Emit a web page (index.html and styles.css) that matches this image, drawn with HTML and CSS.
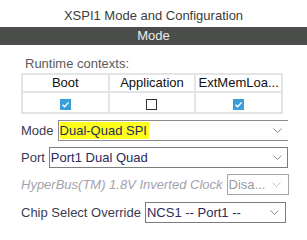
FILE: index.html
```html
<!DOCTYPE html>
<html lang="en">
<head>
  <meta charset="UTF-8">
  <link rel="stylesheet" href="styles.css">
</head>
<body>
  <div class="title">XSPI1 Mode and Configuration</div>
  <div class="bar">Mode</div>

  <div class="panel">
    <div class="caption">Runtime contexts:</div>
    <table class="contexts">
      <tr>
        <th>Boot</th>
        <th>Application</th>
        <th title="ExtMemLoader">ExtMemLoa...</th>
      </tr>
      <tr>
        <td><span class="check on"><svg width="11" height="11" viewBox="0 0 11 11"><polyline points="2.5,5.8 4.6,7.8 8.6,3.4" fill="none" stroke="#fff" stroke-width="1.4"/></svg></span></td>
        <td><span class="check"></span></td>
        <td><span class="check on"><svg width="11" height="11" viewBox="0 0 11 11"><polyline points="2.5,5.8 4.6,7.8 8.6,3.4" fill="none" stroke="#fff" stroke-width="1.4"/></svg></span></td>
      </tr>
    </table>

    <div class="row row-mode">
      <span class="label">Mode</span>
      <div class="select open">
        <span class="value"><span class="hl">Dual-Quad SPI</span></span>
        <svg class="chev" width="9" height="5" viewBox="0 0 9 5"><polyline points="0.5,0.5 4.5,4.5 8.5,0.5" fill="none" stroke="#8a8a8a" stroke-width="1"/></svg>
      </div>
    </div>

    <div class="row row-port">
      <span class="label">Port</span>
      <div class="select">
        <span class="value">Port1 Dual Quad</span>
        <svg class="chev" width="9" height="5" viewBox="0 0 9 5"><polyline points="0.5,0.5 4.5,4.5 8.5,0.5" fill="none" stroke="#8a8a8a" stroke-width="1"/></svg>
      </div>
    </div>

    <div class="row row-hyper disabled">
      <span class="label">HyperBus(TM) 1.8V Inverted Clock</span>
      <div class="select">
        <span class="value">Disa...</span>
        <svg class="chev" width="9" height="5" viewBox="0 0 9 5"><polyline points="0.5,0.5 4.5,4.5 8.5,0.5" fill="none" stroke="#c4c4c4" stroke-width="1"/></svg>
      </div>
    </div>

    <div class="row row-cs">
      <span class="label">Chip Select Override</span>
      <div class="select">
        <span class="value">NCS1 -- Port1 --</span>
        <svg class="chev" width="9" height="5" viewBox="0 0 9 5"><polyline points="0.5,0.5 4.5,4.5 8.5,0.5" fill="none" stroke="#8a8a8a" stroke-width="1"/></svg>
      </div>
    </div>
  </div>
</body>
</html>
```

FILE: styles.css
```css
body {
  margin: 0;
  background: #fff;
  font-family: "Liberation Sans", Arial, sans-serif;
  font-size: 13px;
  color: #3b3b52;
}
.title {
  height: 27px;
  line-height: 31px;
  text-align: center;
  color: #3c3c3c;
  font-size: 13px;
}
.bar {
  height: 18px;
  line-height: 18px;
  background: #4b4d4b;
  color: #ececec;
  text-align: center;
}
.panel {
  padding: 10px 19px 0 21px;
}
.caption {
  color: #5a5a5a;
  line-height: 17px;
  padding-left: 4px;
}
.contexts {
  border-collapse: collapse;
  width: 262px;
  table-layout: fixed;
  margin-top: 1px;
}
.contexts th,
.contexts td {
  border: 2px solid #e2e4e6;
  text-align: center;
  padding: 0;
  white-space: nowrap;
}
.contexts th {
  font-weight: normal;
  color: #111;
  height: 16px;
  line-height: 16px;
}
.contexts td {
  height: 19px;
}
.check {
  display: inline-block;
  width: 11px;
  height: 11px;
  box-sizing: border-box;
  border: 1px solid #333;
  vertical-align: middle;
  margin-top: 1px;
}
.check.on {
  border: none;
  background: #3a9fd9;
}
.check svg {
  display: block;
}
.row {
  display: flex;
  align-items: center;
  margin-top: 6px;
}
.label {
  white-space: nowrap;
  margin-right: 4px;
}
.select {
  flex: 1;
  height: 21px;
  box-sizing: border-box;
  border: 1px solid #7d7d7d;
  display: flex;
  align-items: center;
  padding-left: 1px;
  padding-right: 5px;
  color: #2a2a5a;
  line-height: 17px;
}
.select.open {
  border-right: none;
  padding-right: 6px;
  border-color: #8c8c8c;
}
.value {
  flex: 1;
  white-space: nowrap;
}
.hl {
  background: #ffff1e;
  display: inline-block;
  padding-right: 2px;
}
.chev {
  display: block;
}
.row-hyper .label {
  font-style: italic;
  color: #a3a3ad;
}
.row-hyper .select {
  flex: 0 0 62px;
  border-color: #a6a6a6;
  color: #9a9aa2;
  padding-right: 7px;
}
.row-cs .select {
  flex: 0 0 141px;
  margin-top: 1px;
  padding-right: 6px;
}
```
